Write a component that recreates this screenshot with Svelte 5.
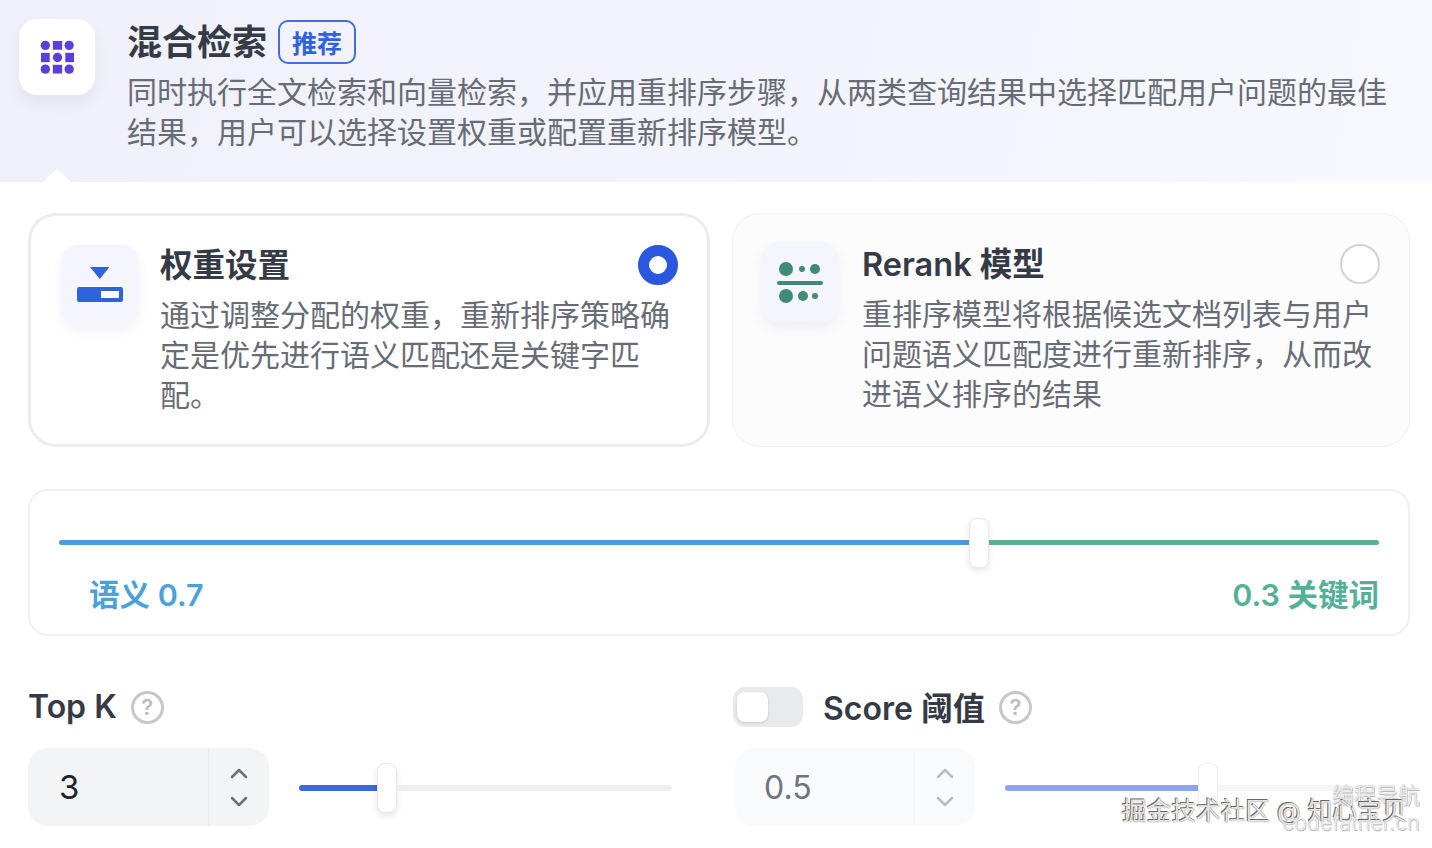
<script>
	const cards = [
		{
			id: 'weight',
			title: '权重设置',
			desc: '通过调整分配的权重，重新排序策略确定是优先进行语义匹配还是关键字匹配。',
			active: true
		},
		{
			id: 'rerank',
			title: 'Rerank 模型',
			desc: '重排序模型将根据候选文档列表与用户问题语义匹配度进行重新排序，从而改进语义排序的结果',
			active: false
		}
	];
</script>

<div class="page">
	<header class="head">
		<div class="head-tile">
			<svg width="35" height="35" viewBox="0 0 36 36" fill="#5a3fd8">
				<circle cx="5.500" cy="5.500" r="4.800" />
				<rect x="13.200" y="1" width="9.600" height="9" />
				<circle cx="30" cy="5.500" r="4.800" />
				<rect x="1" y="13.200" width="9" height="9.600" />
				<circle cx="18" cy="18" r="4.800" />
				<rect x="26" y="13.200" width="9" height="9.600" />
				<circle cx="5.500" cy="30" r="4.800" />
				<rect x="13.200" y="25.500" width="9.600" height="9" />
				<circle cx="30" cy="30" r="4.800" />
			</svg>
		</div>
		<div class="head-text">
			<div class="head-title">
				<h1>混合检索</h1>
				<span class="tag">推荐</span>
			</div>
			<p>同时执行全文检索和向量检索，并应用重排序步骤，从两类查询结果中选择匹配用户问题的最佳结果，用户可以选择设置权重或配置重新排序模型。</p>
		</div>
		<span class="notch"></span>
	</header>

	<main class="body">
		<section class="cards">
			{#each cards as card}
				<article class="card" class:active={card.active}>
					<div class="tile">
						{#if card.id === 'weight'}
							<svg width="46" height="36" viewBox="0 0 46 36">
								<path d="M13 0h19.500l-9.750 12z" fill="#2f63dd" />
								<rect x="0" y="20" width="46" height="15" rx="2" fill="#2f63dd" />
								<rect x="24" y="24" width="18" height="7" fill="#fff" />
							</svg>
						{:else}
							<svg width="46" height="44" viewBox="0 0 46 44" fill="#3f8a78">
								<circle cx="9" cy="9" r="7" />
								<circle cx="25" cy="9" r="3" />
								<circle cx="38" cy="9" r="5" />
								<rect x="0" y="21" width="46" height="4" rx="2" />
								<circle cx="9" cy="36" r="7" />
								<circle cx="26" cy="36" r="5" />
								<circle cx="38" cy="36" r="3" />
							</svg>
						{/if}
					</div>
					<div class="card-text">
						<div class="card-title">
							<h2>{card.title}</h2>
							<span class="radio" class:on={card.active}></span>
						</div>
						<p>{card.desc}</p>
					</div>
				</article>
			{/each}
		</section>

		<section class="weights">
			<div class="split">
				<span class="seg blue"></span>
				<span class="thumb"></span>
				<span class="seg green"></span>
			</div>
			<div class="split-labels">
				<span class="lbl-blue">语义 0.7</span>
				<span class="lbl-green">0.3 关键词</span>
			</div>
		</section>

		<section class="params">
			<div class="param">
				<div class="param-head">
					<span class="param-name">Top K</span>
					<span class="help">?</span>
				</div>
				<div class="param-row">
					<div class="num">
						<span class="num-value">3</span>
						<span class="stepper">
							<svg width="18" height="12" viewBox="0 0 18 12"><path d="M2 10l7-7 7 7" /></svg>
							<svg width="18" height="12" viewBox="0 0 18 12"><path d="M2 2l7 7 7-7" /></svg>
						</span>
					</div>
					<div class="range">
						<span class="fill" style="width: 78px"></span>
						<span class="thumb small"></span>
						<span class="rest"></span>
					</div>
				</div>
			</div>

			<div class="param off">
				<div class="param-head">
					<span class="toggle"><span class="knob"></span></span>
					<span class="param-name">Score 阈值</span>
					<span class="help">?</span>
				</div>
				<div class="param-row">
					<div class="num">
						<span class="num-value">0.5</span>
						<span class="stepper">
							<svg width="18" height="12" viewBox="0 0 18 12"><path d="M2 10l7-7 7 7" /></svg>
							<svg width="18" height="12" viewBox="0 0 18 12"><path d="M2 2l7 7 7-7" /></svg>
						</span>
					</div>
					<div class="range">
						<span class="fill" style="width: 193px"></span>
						<span class="thumb small"></span>
						<span class="rest"></span>
					</div>
				</div>
			</div>
		</section>
	</main>

	<span class="mark mark-nav">编程导航</span>
	<span class="mark mark-url">codefather.cn</span>
	<span class="mark mark-juejin">掘金技术社区 @ 知心宝贝</span>
</div>

<style>
	:global(body) {
		margin: 0;
		background: #fff;
	}

	* {
		box-sizing: border-box;
	}

	h1,
	h2,
	p {
		margin: 0;
	}

	.page {
		position: relative;
		width: 1432px;
		height: 848px;
		overflow: hidden;
		font-family: Inter, "Noto Sans CJK SC", sans-serif;
		color: #374151;
	}

	.head {
		position: relative;
		display: flex;
		gap: 32px;
		height: 182px;
		padding: 19px 40px 0 19px;
		background: linear-gradient(100deg, #eff0f9, #f7f8fd);
	}

	.head-tile {
		display: flex;
		flex: none;
		align-items: center;
		justify-content: center;
		width: 76px;
		height: 76px;
		border-radius: 18px;
		background: #fff;
		box-shadow: 0 8px 14px rgba(90, 90, 140, 0.08);
	}

	.head-text {
		padding-top: 1px;
	}

	.head-title {
		display: flex;
		align-items: center;
		gap: 11px;
		height: 44px;
		margin-bottom: 8px;
	}

	h1 {
		font-size: 35px;
		font-weight: 700;
		line-height: 44px;
		color: #353b46;
	}

	.tag {
		display: flex;
		align-items: center;
		justify-content: center;
		width: 78px;
		height: 44px;
		border: 2px solid #3f6fd8;
		border-radius: 10px;
		font-size: 25px;
		font-weight: 600;
		color: #2f63dd;
	}

	.head-text p {
		font-size: 30px;
		line-height: 40px;
		color: #676c76;
	}

	.notch {
		position: absolute;
		left: 43px;
		bottom: 0;
		width: 28px;
		height: 12px;
		background: #fff;
		clip-path: polygon(0 100%, 40% 8%, 50% 0, 60% 8%, 100% 100%);
	}

	.body {
		padding: 31px 22px 0 28px;
	}

	.cards {
		display: flex;
		gap: 22px;
	}

	.card {
		display: flex;
		gap: 23px;
		width: 678px;
		height: 234px;
		padding: 28px 29px 0 28px;
		border: 1px solid #f0f1f3;
		border-radius: 28px;
		background: #fcfcfd;
	}

	.card.active {
		gap: 21px;
		width: 682px;
		padding: 29px 29px 0 30px;
		border: 3px solid #ececee;
		background: #fff;
	}

	.tile {
		display: flex;
		flex: none;
		align-items: center;
		justify-content: center;
		width: 78px;
		height: 80px;
		border-radius: 18px;
		background: #f5f5fd;
		box-shadow: 0 6px 12px rgba(90, 90, 140, 0.07);
	}

	.card-text {
		flex: 1;
		padding-top: 3px;
	}

	.card.active .card-text {
		padding-top: 1px;
	}

	.card-title {
		display: flex;
		align-items: center;
		justify-content: space-between;
		height: 40px;
		margin-bottom: 9px;
	}

	h2 {
		font-size: 32.500px;
		font-weight: 600;
		line-height: 40px;
		color: #353b46;
	}

	.card-text p {
		font-size: 30px;
		line-height: 40px;
		color: #676c76;
	}

	.radio {
		width: 40px;
		height: 40px;
		margin-bottom: 3px;
		border: 2px solid #d2d3d6;
		border-radius: 50%;
		background: #fff;
	}

	.radio.on {
		margin-bottom: 2px;
		border: 11px solid #2a56e0;
	}

	.weights {
		height: 147px;
		margin-top: 42px;
		padding: 27px 29px 0;
		border: 2px solid #f0f0f2;
		border-radius: 20px;
	}

	.split {
		display: flex;
		align-items: center;
		height: 50px;
	}

	.seg {
		height: 5px;
		margin-bottom: 2px;
	}

	.seg.blue {
		flex: 7;
		border-radius: 3px 0 0 3px;
		background: #4d9ade;
	}

	.seg.green {
		flex: 3;
		border-radius: 0 3px 3px 0;
		background: #5fae9a;
	}

	.thumb {
		flex: none;
		width: 20px;
		height: 50px;
		border: 1px solid #e8e8ea;
		border-radius: 8px;
		background: #fff;
		box-shadow: 0 3px 6px rgba(0, 0, 0, 0.1);
	}

	.split-labels {
		display: flex;
		justify-content: space-between;
		margin-top: 7px;
		padding-left: 30px;
		font-size: 30.500px;
		font-weight: 600;
		line-height: 40px;
	}

	.lbl-blue {
		color: #4ba2d9;
	}

	.lbl-green {
		color: #54b198;
	}

	.params {
		display: flex;
		gap: 61px;
		margin-top: 51px;
	}

	.param {
		width: 644px;
	}

	.param-head {
		display: flex;
		align-items: center;
		height: 40px;
	}

	.param-name {
		margin-bottom: 2px;
		font-size: 32px;
		font-weight: 600;
		color: #353b46;
	}

	.help {
		display: flex;
		align-items: center;
		justify-content: center;
		width: 33px;
		height: 33px;
		margin-left: 14px;
		border: 3px solid #c6c7c9;
		border-radius: 50%;
		font-size: 22px;
		font-weight: 600;
		color: #bcbdc0;
	}

	.toggle {
		display: flex;
		align-items: center;
		width: 70px;
		height: 40px;
		margin-right: 20px;
		padding: 0 3px 0 4px;
		border-radius: 12px;
		background: #e9eaec;
	}

	.knob {
		width: 31px;
		height: 30px;
		border-radius: 8px;
		background: #fff;
		box-shadow: 0 1px 3px rgba(0, 0, 0, 0.15);
	}

	.param-row {
		display: flex;
		align-items: center;
		gap: 30px;
		margin-top: 21px;
	}

	.off .param-row {
		margin-left: 2px;
	}

	.num {
		display: flex;
		flex: none;
		width: 241px;
		height: 78px;
		border-radius: 20px;
		background: #f2f4f6;
		color: #1f2228;
	}

	.off .num {
		width: 240px;
		background: #f8fafb;
		color: #6f7480;
	}

	.num-value {
		flex: 1;
		padding-left: 31px;
		font-size: 33px;
		line-height: 78px;
	}

	.off .num-value {
		padding-left: 29px;
		font-size: 32px;
		line-height: 80px;
	}

	.stepper {
		display: flex;
		flex: none;
		flex-direction: column;
		align-items: center;
		justify-content: center;
		gap: 17px;
		width: 61px;
		border-left: 1px solid #e8eaec;
	}

	.off .stepper {
		border-left-color: #f3f5f6;
	}

	.stepper path {
		fill: none;
		stroke: #6b6f76;
		stroke-width: 2.500;
		stroke-linecap: round;
		stroke-linejoin: round;
	}

	.off .stepper path {
		stroke: #b9bcc2;
	}

	.range {
		display: flex;
		flex: none;
		align-items: center;
		width: 373px;
		margin-top: 2px;
	}

	.fill {
		flex: none;
		height: 6px;
		border-radius: 3px 0 0 3px;
		background: #3d69df;
	}

	.off .fill {
		background: #8ca5ee;
	}

	.rest {
		flex: 1;
		height: 6px;
		border-radius: 0 3px 3px 0;
		background: #eeeeef;
	}

	.off .rest {
		background: #f5f5f6;
	}

	.off .thumb {
		border-color: #f1f1f3;
		box-shadow: 0 3px 6px rgba(0, 0, 0, 0.04);
	}

	.mark {
		position: absolute;
		white-space: nowrap;
		pointer-events: none;
	}

	.mark-nav {
		top: 781px;
		right: 12px;
		font-size: 22px;
		line-height: 28px;
		color: rgba(255, 255, 255, 0.8);
		text-shadow: 0 0 1px #a0a0a0, 0.500px 0.500px 0 #bbb;
	}

	.mark-url {
		top: 808px;
		right: 12px;
		font-size: 21.500px;
		font-weight: 300;
		line-height: 28px;
		color: rgba(255, 255, 255, 0.8);
		text-shadow: 0 0 1px #a0a0a0, 0.500px 0.500px 0 #bbb;
	}

	.mark-juejin {
		top: 796px;
		left: 1122px;
		font-size: 24.700px;
		line-height: 30px;
		color: #e6e6e6;
		text-shadow: -1px -1px 0 #666, 0 0 1px #555, 1px 1px 0 #fff;
	}
</style>
